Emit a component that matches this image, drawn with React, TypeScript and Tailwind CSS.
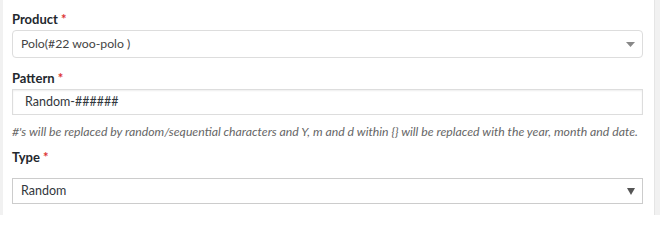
export default function App() {
  return (
    <div className="flex h-[215px] w-[660px] bg-white font-['Lato',sans-serif] text-[12.5px] text-[#32373c]">
      <div className="w-[3px] shrink-0 bg-[#f1f1f1]" />
      <div className="flex min-w-0 flex-1 flex-col pl-[9px] pr-[11px]">
        {/* Product */}
        <label className="mt-[9px] h-[20px] text-[13px] leading-[20px] font-bold text-[#23282d]">
          Product <span className="text-[#dc3232]">*</span>
        </label>
        <div className="mt-[1px] flex h-[28px] items-center justify-between rounded-[4px] border border-[#ddd] pl-[8px] pr-[7px]">
          <span className="text-[12.25px] text-[#444]">Polo(#22 woo-polo )</span>
          <svg width="9" height="5" viewBox="0 0 9 5" className="mt-[1px]">
            <path d="M0 0h9L4.5 5z" fill="#888" />
          </svg>
        </div>

        {/* Pattern */}
        <label className="mt-[10px] h-[20px] text-[13px] leading-[20px] font-bold text-[#23282d]">
          Pattern <span className="text-[#dc3232]">*</span>
        </label>
        <div className="mt-[1px] flex h-[26px] items-center border border-[#ddd] pl-[12px] text-[12.5px] shadow-[inset_0_1px_2px_rgba(0,0,0,0.07)]">
          Random-######
        </div>
        <p className="mt-[7px] h-[20px] whitespace-nowrap text-[12.25px] leading-[20px] italic text-[#666]">
          #'s will be replaced by random/sequential characters and Y, m and d within {"{}"} will be replaced with the year, month and date.
        </p>

        {/* Type */}
        <label className="mt-[5px] h-[20px] text-[13px] leading-[20px] font-bold text-[#23282d]">
          Type <span className="text-[#dc3232]">*</span>
        </label>
        <div className="mt-[11px] flex h-[26px] items-center justify-between border border-[#ccc] pl-[8px] pr-[7px]">
          <span className="text-[12.5px]">Random</span>
          <svg width="8" height="7" viewBox="0 0 8 7">
            <path d="M0 0h8L4 7z" fill="#555" />
          </svg>
        </div>
      </div>
      <div className="w-[6px] shrink-0 border-l border-[#e5e5e5] bg-[#f1f1f1]" />
    </div>
  );
}
